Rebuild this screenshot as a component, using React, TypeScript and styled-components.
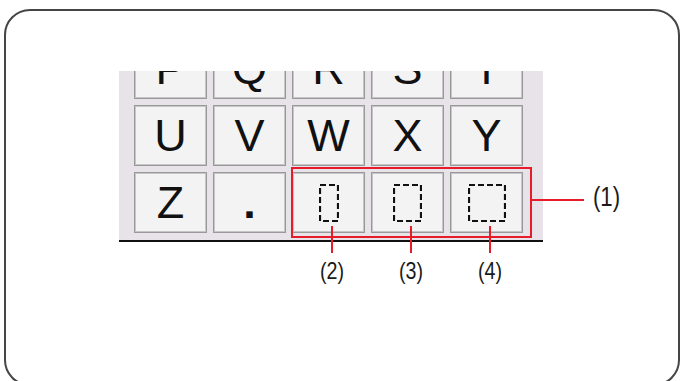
import React from 'react';
import styled, { createGlobalStyle } from 'styled-components';

const GlobalStyle = createGlobalStyle`
  html,
  body {
    margin: 0;
    background: #ffffff;
    overflow: hidden;
  }
`;

const Page = styled.div`
  box-sizing: border-box;
  width: 681px;
  height: 381px;
  padding: 9px 1px 0 4px;
  overflow: hidden;
  font-family: 'Liberation Sans', Arial, sans-serif;
`;

const Frame = styled.div`
  box-sizing: border-box;
  height: 377px;
  padding: 60px 0 0 113px;
  border: 2px solid #454545;
  border-radius: 26px;
`;

const Figure = styled.div`
  position: relative;
  width: 424px;
`;

const Panel = styled.div`
  box-sizing: border-box;
  display: flex;
  flex-direction: column;
  justify-content: flex-end;
  height: 171px;
  padding: 0 19px 7px 15px;
  overflow: hidden;
  background: #e7e3e9;
  border-bottom: 2px solid #111111;
`;

const Keypad = styled.div`
  flex-shrink: 0;
  display: grid;
  grid-template-columns: repeat(5, 73px);
  grid-auto-rows: 61px;
  gap: 6px;
`;

const Key = styled.div<{ $bold?: boolean }>`
  box-sizing: border-box;
  display: flex;
  align-items: center;
  justify-content: center;
  background: #f3f3f3;
  border: 1px solid #999999;
  box-shadow: inset 0 0 0 1px #c6c6c6;
  color: #111111;
  font-size: 45px;
  font-weight: ${(p) => (p.$bold ? 700 : 400)};
  line-height: 1;
`;

const Callout = styled.div`
  position: absolute;
  left: 172px;
  top: 96px;
  width: 241px;
  height: 71px;
  box-sizing: border-box;
  border: 2px solid #e61c2b;
`;

const HLeader = styled.div`
  position: absolute;
  left: 413px;
  top: 128px;
  width: 52px;
  height: 2px;
  background: #e61c2b;
`;

const VLeader = styled.div<{ $x: number }>`
  position: absolute;
  left: ${(p) => p.$x - 1}px;
  top: 155px;
  width: 2px;
  height: 27px;
  background: #e61c2b;
`;

const Label = styled.span<{ $big?: boolean }>`
  position: absolute;
  font-size: ${(p) => (p.$big ? 27 : 24)}px;
  line-height: 1;
  color: #1a1a1a;
  white-space: nowrap;
`;

const BottomLabel = styled(Label)<{ $x: number }>`
  left: ${(p) => p.$x}px;
  top: 188px;
  transform: translateX(-50%) scaleX(0.82);
`;

const SideLabel = styled(Label)`
  left: 474px;
  top: 113px;
  transform: scaleX(0.82);
  transform-origin: left center;
`;

function DashedBox({ w }: { w: number }) {
  return (
    <svg width={w} height={38} viewBox={`0 0 ${w} 38`}>
      <rect
        x={1}
        y={1}
        width={w - 2}
        height={36}
        fill="none"
        stroke="#111"
        strokeWidth={2.2}
        strokeDasharray="6 3"
      />
    </svg>
  );
}

const TOP_ROW = ['P', 'Q', 'R', 'S', 'T'];
const MID_ROW = ['U', 'V', 'W', 'X', 'Y'];
const SPACES = [
  { w: 20, x: 213, label: '(2)' },
  { w: 29, x: 292, label: '(3)' },
  { w: 38, x: 371, label: '(4)' },
];

export default function App() {
  return (
    <Page>
      <GlobalStyle />
      <Frame>
        <Figure>
          <Panel>
            <Keypad>
              {[...TOP_ROW, ...MID_ROW].map((ch) => (
                <Key key={ch}>{ch}</Key>
              ))}
              <Key>Z</Key>
              <Key $bold>.</Key>
              {SPACES.map((s) => (
                <Key key={s.label}>
                  <DashedBox w={s.w} />
                </Key>
              ))}
            </Keypad>
          </Panel>

          <Callout />
          <HLeader />
          <SideLabel $big>(1)</SideLabel>
          {SPACES.map((s) => (
            <React.Fragment key={s.label}>
              <VLeader $x={s.x} />
              <BottomLabel $x={s.x}>{s.label}</BottomLabel>
            </React.Fragment>
          ))}
        </Figure>
      </Frame>
    </Page>
  );
}
